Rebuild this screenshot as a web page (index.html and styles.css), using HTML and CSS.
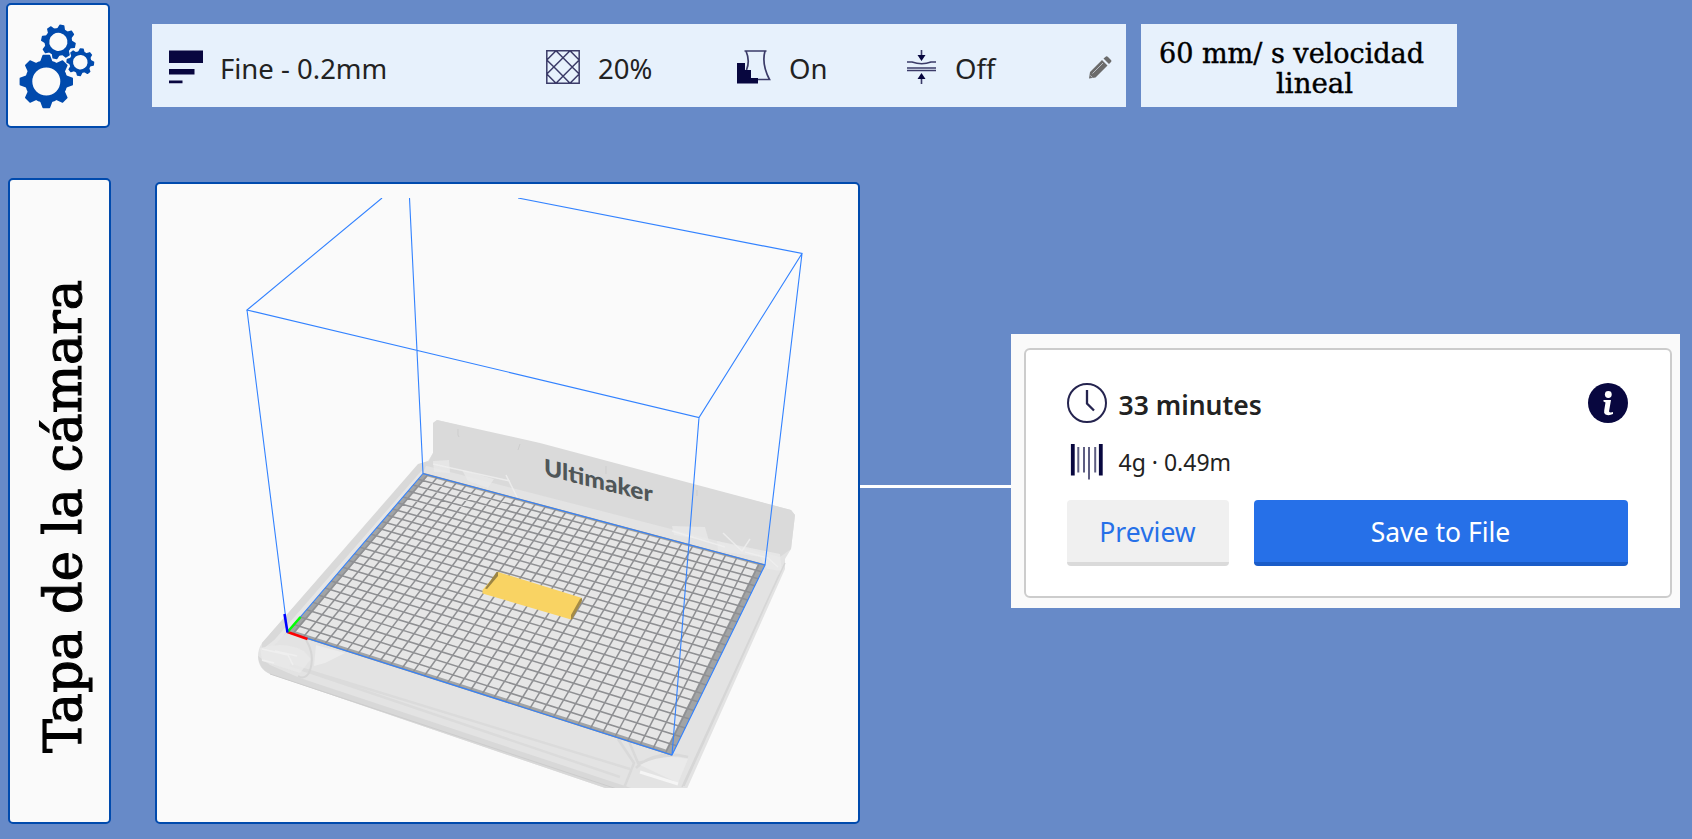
FILE: index.html
```html
<!DOCTYPE html>
<html lang="es">
<head>
<meta charset="utf-8">
<title>Tapa de la cámara</title>
<link rel="stylesheet" href="styles.css">
</head>
<body>
<header class="top">
  <div class="card gears">
    <svg width="99" height="121" viewBox="8 5 99 121">
      <defs>
        <g id="gear">
          <circle r="17.6" fill="none" stroke="#004aad" stroke-width="7.2"/>
          <g id="teeth4" fill="#004aad">
            <path id="tooth" d="M-6.5-19 L-4-25.8 Q-3.8-26.7-3-26.7 H3 Q3.8-26.7 4-25.8 L6.5-19Z"/>
            <use href="#tooth" transform="rotate(45)"/>
            <use href="#tooth" transform="rotate(90)"/>
            <use href="#tooth" transform="rotate(135)"/>
          </g>
          <use href="#teeth4" transform="rotate(180)"/>
        </g>
      </defs>
      <use href="#gear" transform="translate(46.3 81.5)"/>
      <use href="#gear" transform="translate(58.4 41.9) rotate(12) scale(.65)"/>
      <use href="#gear" transform="translate(80.3 62.2) rotate(6) scale(.52)"/>
    </svg>
  </div>
  <div class="settings">
    <div class="item profile">
      <svg width="34" height="34" viewBox="0 0 34 34" fill="#08073f"><path d="M0 .5H34V13H0ZM0 19H25.500V24.500H0ZM0 30.500H13.500V33.300H0Z"/></svg>
      <span class="t-fine">Fine - 0.2mm</span>
    </div>
    <div class="item infill">
      <svg width="34" height="34" viewBox="0 0 34 34" fill="none" stroke="#3b3b68" stroke-width="1.500"><path d="M.8.8H33.200V33.200H.8ZM.8 10 10 .8M.8 24 24 .8M10 33.200 33.200 10M24 33.200 33.200 24M24 .8 33.200 10M10 .8 33.200 24M.8 10 10 19M.8 24 10 33.200M10 19 24 33.200"/></svg>
      <span class="t-pct">20%</span>
    </div>
    <div class="item support">
      <svg width="34" height="34" viewBox="0 0 34 34"><path d="M7.500 1H29.500M9 1C12 8 12 14 9.500 20M28 1C25.500 10 27 19 32.500 29.500H20" fill="none" stroke="#3b3b68" stroke-width="1.700"/><path d="M0 13H8V20H14V28H21V33.500H0Z" fill="#08073f"/></svg>
      <span class="t-on">On</span>
    </div>
    <div class="item adhesion">
      <svg width="30" height="34" viewBox="0 0 30 34" fill="none" stroke="#3b3b68" stroke-width="1.600"><path d="M0 12H5Q15 15.500 24 12H29M0 18H29M0 20.500H29" stroke-width="1.500"/><path d="M14.500 0V9M14.500 25V34"/><path d="M10.500 5H18.500L14.500 11ZM10.500 29H18.500L14.500 23Z" fill="#08073f" stroke="none"/></svg>
      <span class="t-off">Off</span>
    </div>
    <svg class="pencil" width="24" height="24" viewBox="0 0 24 24"><path d="M1 22.500 2 16 14 4 19.500 9.500 7.500 21.500ZM15.500 2.500 18 .5Q19 0 20 1L23 4Q24 5 23 6L21 8Z" fill="#6b6b6b"/><path d="M4.500 17.500 15 7M2.300 19.500 4.500 21.500" stroke="#b8bcc2" stroke-width="1"/></svg>
  </div>
  <div class="speed">
    <svg width="316" height="83" viewBox="1141 24 316 83">
      <text class="slab" stroke-width=".4" x="1159" y="63" font-size="28" textLength="265" lengthAdjust="spacingAndGlyphs">60 mm/ s velocidad</text>
      <text class="slab" stroke-width=".4" x="1276" y="93" font-size="28" textLength="77" lengthAdjust="spacingAndGlyphs">lineal</text>
    </svg>
  </div>
</header>

<main class="row">
  <div class="card title">
    <svg width="99" height="643" viewBox="10 179 99 643">
      <text class="slab" stroke-width="1.100" transform="translate(81 752) rotate(-90)" font-size="53" textLength="473" lengthAdjust="spacingAndGlyphs">Tapa de la cámara</text>
    </svg>
  </div>
  <div class="card view">
    <svg width="701" height="639" viewBox="157 183 701 639">
      <defs><clipPath id="clip"><path d="M156 197H860V787H156Z"/></clipPath></defs>
      <g clip-path="url(#clip)">
        <path d="M418 465 428 460 433 452V422L437 419 540 444 791 509 795 514 791 548 785 558V568L686 790H614L270 673Q258 668 258 655 258 648 262 642Z" fill="#e3e3e3"/>
        <path d="M433 452V422L437 419 540 442 791 509 795 514 791 548 780 556 423 464 429 460Z" fill="#dadada"/>
        <path d="M418 463 428 460 423 472 288 631 262 650V642Z" fill="#d9d9d9"/>
        <path d="M423 471 276 640 266 648" fill="none" stroke="#e6e6e6" stroke-width="4"/>
        <path d="M258 655Q259 668 270 673L614 790H640L300 677 270 664Z" fill="#d8d8d8"/>
        <path d="M300 668 620 776M290 664 630 768" fill="none" stroke="#dbdbdb" stroke-width="2.500"/>
        <path d="M270 673 620 789" fill="none" stroke="#cccccc" stroke-width="1"/>
        <path d="M260 647Q285 640 304 650L311 658 300 672 262 660Z" fill="#e9e9e9" opacity=".8"/>
        <path d="M306 639Q316 655 309 672 304 679 298 675" fill="none" stroke="#d6d6d6" stroke-width="2"/>
        <path d="M262 648 288 654 293 664M262 659 274 662M275 650 297 655" fill="none" stroke="#efefef" stroke-width="1.500"/>
        <path d="M316 644 345 652 325 662 314 665Z" fill="#ececec"/>
        <path d="M433 460 449 459 450 472 434 471ZM462 469 494 478 488 487 468 480ZM672 525 705 526 709 540 674 534ZM717 540 780 553 782 570 767 568 760 556 718 550Z" fill="#e8e8e8" opacity=".8"/>
        <path d="M433 463 510 480M506 474 517 496M672 530 725 546M723 532 742 550 750 538M745 551 768 557 778 566" fill="none" stroke="#efefef" stroke-width="1.500" opacity=".8"/>
        <path d="M458 428V434L459 436M520 443 518 449M606 465V473M697 489V495" fill="none" stroke="#cdcdcd"/>
        <path d="M785 562 770 594 684 785M779 574 682 786" fill="none" stroke="#d6d6d6" stroke-width="1.500"/>
        <path d="M618 738 634 762 624 787M628 738 638 762 672 754M636 767Q655 748 688 756" fill="none" stroke="#d9d9d9" stroke-width="2.500"/>
        <path d="M640 764Q662 752 688 758L678 782Z" fill="#eaeaea"/>
        <path d="M640 771 678 783" stroke="#f5f5f5" stroke-width="3"/>
        <text class="brand" transform="matrix(.97 .245 0 1 544 474)" textLength="112" lengthAdjust="spacingAndGlyphs">Ultimaker</text>
        <path d="M287.500 631 423 472.500 765 564 672 754Z" fill="#e6e6e6"/>
        <path id="band" fill="#8b8d8f" opacity=".75" fill-rule="evenodd"/>
        <path id="grid" fill="none" stroke="#8f9093" stroke-width="1.550"/>
        <path d="M498 571 582 597 571 618.500 482.500 592.500V589Z" fill="#f9d363"/>
        <path d="M496.500 571 498 571V575L487 588 485 587.500Z" fill="#9b8444"/>
        <path d="M582 597V600L572 618.500 571 618.500V614L580 598Z" fill="#a58b45"/>
        <path d="M382 197 247 309 699 416.500 802 252.500 518 197M409.500 197 423 472.500M247 309 287.500 631M802 252.500 765 564M699 416.500 672 754M287.500 631 423 472.500 765 564 672 754Z" fill="none" stroke="#3282ff" stroke-width="1.100"/>
        <path d="M287.500 631 307.500 638" stroke="#f00" stroke-width="2.500"/>
        <path d="M287.500 631 300.500 616" stroke="#0f0" stroke-width="2.500"/>
        <path d="M287.500 631.500 284.500 613" stroke="#00f" stroke-width="2.500"/>
      </g>
    </svg>
  </div>
  <div class="link"></div>
  <section class="result">
    <div class="panel">
      <div class="line time">
        <svg width="40" height="40" viewBox="0 0 40 40" fill="none" stroke="#25244f" stroke-width="2"><circle cx="20" cy="20" r="19"/><path d="M20 7V20.500L27 27.500" stroke-width="2.300"/></svg>
        <b class="t-min">33 minutes</b>
        <svg class="info" width="40" height="40" viewBox="0 0 40 40"><circle cx="20" cy="20" r="20" fill="#08073f"/><circle cx="20.300" cy="11.500" r="3.400" fill="#fff"/><path d="M15.500 17H23L21 28.500Q22 30 25 29V31Q21 33 17.500 31.500 15.500 30.500 16.200 27.500L17.500 19.500 15.500 18.500Z" fill="#fff"/></svg>
      </div>
      <div class="line material">
        <svg width="40" height="40" viewBox="0 0 40 40" fill="none" stroke="#08073f"><path d="M5.800 4V35.500M33.800 4V35.500" stroke-width="3.800"/><path d="M11.300 7V32.500M17 7V32.500M22 7V39.500M28.200 7V32.500" stroke-width="2" opacity=".65"/></svg>
        <span class="t-mat">4g · 0.49m</span>
      </div>
      <div class="buttons">
        <button class="preview"><span>Preview</span></button>
        <button class="save"><span>Save to File</span></button>
      </div>
    </div>
  </section>
</main>
<script src="scene.js"></script>
</body>
</html>
```
FILE: styles.css
```css
* { box-sizing: border-box; }
body {
  margin: 0;
  width: 1692px;
  height: 839px;
  overflow: hidden;
  background: #678ac8;
  font-family: "Noto Sans", sans-serif;
  color: #222;
}
svg { display: block; flex: none; }
.card {
  background: #fafafa;
  border: 2px solid #004aad;
  border-radius: 5px;
  flex: none;
}
.slab { font-family: "DejaVu Serif Condensed", "DejaVu Serif", serif; fill: #000; stroke: #000; }
.top { display: flex; align-items: flex-start; height: 177px; padding: 3px 0 0 6px; }
.gears { width: 104px; height: 125px; }
.settings {
  display: grid;
  grid-template-columns: 377px 191px 170px 181px 24px;
  align-items: center;
  width: 974px;
  height: 83px;
  margin: 21px 0 0 42px;
  padding: 3px 0 0 17px;
  background: #e7f1fc;
}
.item { display: flex; align-items: center; gap: 18px; font-size: 27.500px; line-height: 34px; white-space: nowrap; }
.item span { padding-top: 4px; }
.item svg { margin-bottom: 1px; }
.profile { gap: 17px; }
.pencil { margin-top: 2px; }
.speed { width: 316px; height: 83px; margin: 21px 0 0 15px; background: #e7f1fc; }
.row { display: flex; align-items: flex-start; padding: 1px 0 0 8px; }
.title { width: 103px; height: 646px; }
.view { width: 705px; height: 642px; margin: 4px 0 0 44px; }
.link { width: 151px; height: 3px; margin-top: 307px; background: #fff; }
.result { width: 669px; height: 274px; margin-top: 156px; padding: 14px 8px 10px 13px; background: #fafafa; }
.panel { height: 250px; padding: 33px 42px 0 40.500px; border: 2px solid #ccc; border-radius: 6px; background: #fff; }
.line { display: flex; align-items: center; gap: 12px; height: 40px; white-space: nowrap; }
.material { margin-top: 17px; }
.info { margin-left: auto; }
.t-min { font-size: 26.500px; font-weight: 600; padding-top: 4px; }
.t-mat { font-size: 23px; padding-top: 4px; }
.buttons { display: flex; gap: 25px; margin-top: 20px; }
button {
  height: 66px;
  padding: 2px 0 0;
  border: 0;
  border-bottom: 4px solid #dadada;
  border-radius: 4px;
  background: #f0f0f0;
  color: #2670e8;
  font: 26.500px "Noto Sans", sans-serif;
}
.preview { width: 162px; }
.save { width: 374px; background: #2670e8; border-bottom-color: #1a5cc8; color: #fff; }
.brand { font: 900 23px Lato, sans-serif; fill: #4f5658; }
```
FILE: scene.js
```js
// Projects bed coordinates (u, v in 0..1) onto the drawn quadrilateral.
const [p0, p1, p2, p3] = [[287.5, 631], [672, 754], [765, 564], [423, 472.5]];
const dx1 = p1[0] - p2[0], dx2 = p3[0] - p2[0], dx3 = p0[0] - p1[0] + p2[0] - p3[0];
const dy1 = p1[1] - p2[1], dy2 = p3[1] - p2[1], dy3 = p0[1] - p1[1] + p2[1] - p3[1];
const det = dx1 * dy2 - dx2 * dy1;
const g = (dx3 * dy2 - dx2 * dy3) / det;
const h = (dx1 * dy3 - dx3 * dy1) / det;

function project(u, v) {
  const w = g * u + h * v + 1;
  const x = ((p1[0] - p0[0] + g * p1[0]) * u + (p3[0] - p0[0] + h * p3[0]) * v + p0[0]) / w;
  const y = ((p1[1] - p0[1] + g * p1[1]) * u + (p3[1] - p0[1] + h * p3[1]) * v + p0[1]) / w;
  return x.toFixed(2) + " " + y.toFixed(2);
}

const cols = 33, rows = 24;
let d = "";
for (let i = 0; i < cols; i++) {
  const u = (i + 0.5) / cols;
  d += "M" + project(u, 0) + "L" + project(u, 1);
}
for (let j = 0; j <= rows; j++) {
  const v = j / rows;
  d += "M" + project(0, v) + "L" + project(1, v);
}
document.getElementById("grid").setAttribute("d", d);

const ring = (a, b, c, e) => "M" + project(a, b) + "L" + project(c, b) + "L" + project(c, e) + "L" + project(a, e) + "Z";
document.getElementById("band").setAttribute("d", ring(0, 0, 1, 1) + ring(0.018, 0.014, 0.982, 0.99));
```
